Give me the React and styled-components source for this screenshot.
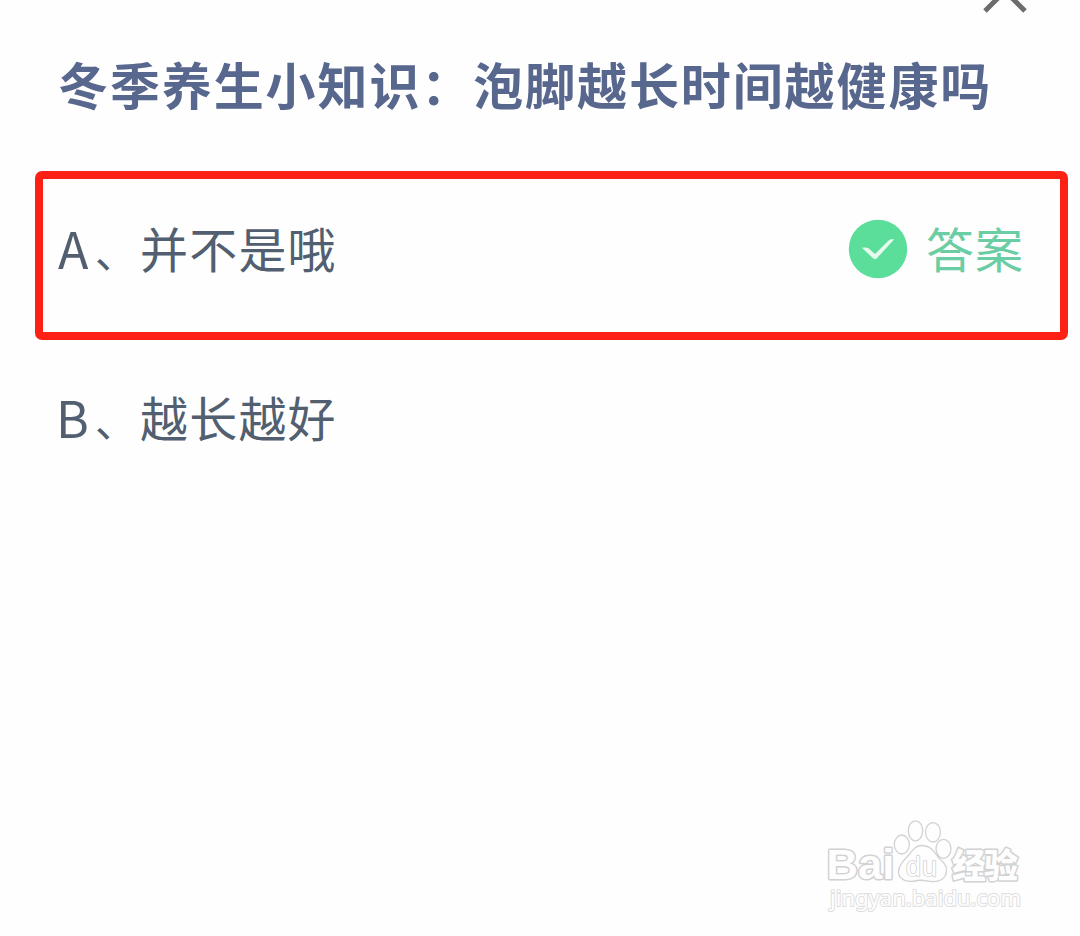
import React from "react";
import styled, { createGlobalStyle } from "styled-components";

const options = [
  { letter: "A", text: "并不是哦", correct: true },
  { letter: "B", text: "越长越好", correct: false },
];

const App = () => {
  return (
    <Page>
      <GlobalStyle />
      <TopBar>
        <CloseIcon viewBox="0 0 48 48">
          <path d="M4 4L44 44M44 4L4 44" />
        </CloseIcon>
      </TopBar>
      <Title>冬季养生小知识：泡脚越长时间越健康吗</Title>

      <Options>
        {options.map((option) => (
          <Option key={option.letter} $correct={option.correct}>
            <Letter $indent={option.letter === "B" ? -2 : 0}>
              {option.letter}
            </Letter>
            <Comma>、</Comma>
            <Label>{option.text}</Label>
            {option.correct && (
              <Answer>
                <CheckIcon viewBox="0 0 60 60">
                  <circle cx="30" cy="30" r="29.2" />
                  <path d="M14 28.8Q18 27.8 20.5 29.3L27 35L40 22Q43 19.3 46 20.4L28.6 39.6Q27 41 25.4 39.6Z" />
                </CheckIcon>
                <AnswerText>答案</AnswerText>
              </Answer>
            )}
          </Option>
        ))}
      </Options>

      <Footer>
        <Watermark viewBox="0 0 200 100">
          <LogoText x="0.5" y="64" fontSize="43" textLength="68" lengthAdjust="spacingAndGlyphs">
            Bai
          </LogoText>
          <Paw>
            <ellipse cx="75.8" cy="29.5" rx="7.5" ry="9.5" />
            <ellipse cx="89.5" cy="15.8" rx="7.2" ry="10" />
            <ellipse cx="107" cy="17.3" rx="7.5" ry="9.7" />
            <ellipse cx="117.5" cy="33.8" rx="7.5" ry="9.5" />
            <path d="M96 30.5C105 30.5 108 37 112 42C117 47 121 50 120.5 56C120 64 113 67 106 66.5C100 66 98 64.5 91 65.5C82 68 72 65 72.5 56C73 50 77 46 81 42C86 37 88 30.5 96 30.5Z" />
          </Paw>
          <LogoText $light x="80" y="60.5" fontSize="27" textLength="31">
            du
          </LogoText>
          <LogoText x="126" y="62.5" fontSize="34" textLength="66">
            经验
          </LogoText>
          <Url x="4" y="90.5" fontSize="22" textLength="191">
            jingyan.baidu.com
          </Url>
        </Watermark>
      </Footer>
    </Page>
  );
};

export default App;

const GlobalStyle = createGlobalStyle`
  body {
    margin: 0;
    background: #fefefe;
    font-family: "Noto Sans CJK SC", sans-serif;
  }
`;

const Page = styled.div`
  display: flex;
  flex-direction: column;
  width: 1080px;
  height: 936px;
  overflow: hidden;
  background: #fefefe;
`;

const TopBar = styled.div`
  display: flex;
  justify-content: flex-end;
  height: 46px;
  padding-right: 51px;
`;

const CloseIcon = styled.svg`
  width: 48px;
  height: 48px;
  margin-top: -33px;
  fill: none;
  stroke: #6c6c6e;
  stroke-width: 5;
`;

const Title = styled.h1`
  margin: 0;
  padding-left: 58px;
  font-size: 50px;
  font-weight: 700;
  line-height: 74px;
  letter-spacing: 1.9px;
  white-space: nowrap;
  color: #58678d;
`;

const Options = styled.div`
  margin: 51px 12px 0 35px;
`;

const Option = styled.div`
  display: flex;
  align-items: center;
  box-sizing: border-box;
  height: 169px;
  padding: 0 36px 17px 15px;
  border: 8px solid ${(props) => (props.$correct ? "#fd2015" : "transparent")};
  border-radius: 7px;
  font-size: 48px;
  line-height: 70px;
  color: #525f70;
`;

const Letter = styled.span`
  width: 37px;
  font-size: 50px;
  text-indent: ${(props) => props.$indent}px;
`;

const Comma = styled.span`
  width: 45px;
  padding-top: 6px;
  font-size: 42px;
`;

const Label = styled.span`
  letter-spacing: 1.2px;
`;

const Answer = styled.div`
  display: flex;
  align-items: center;
  gap: 18px;
  margin-left: auto;
`;

const CheckIcon = styled.svg`
  width: 60px;
  height: 60px;
  margin-top: 3px;

  circle {
    fill: #5cde9b;
  }

  path {
    fill: #e4fbee;
  }
`;

const AnswerText = styled.span`
  letter-spacing: 1px;
  color: #6bcda3;
`;

const Footer = styled.div`
  display: flex;
  justify-content: flex-end;
  margin-top: auto;
  padding: 0 54px 21px 0;
`;

const Watermark = styled.svg`
  width: 200px;
  height: 100px;
  overflow: visible;
  fill: #fefefe;
  stroke: #d2d2d2;
  stroke-width: 2;
  stroke-linejoin: round;
`;

const Paw = styled.g`
  stroke-width: 1.3;
`;

const LogoText = styled.text`
  font-family: "Liberation Sans", "Noto Sans CJK SC", sans-serif;
  font-weight: ${(props) => (props.$light ? 400 : 900)};
  stroke-width: ${(props) => (props.$light ? 1.6 : 3)}px;
  paint-order: stroke;
`;

const Url = styled.text`
  font-family: "Noto Sans", sans-serif;
  stroke: #dedede;
  paint-order: stroke;
`;
